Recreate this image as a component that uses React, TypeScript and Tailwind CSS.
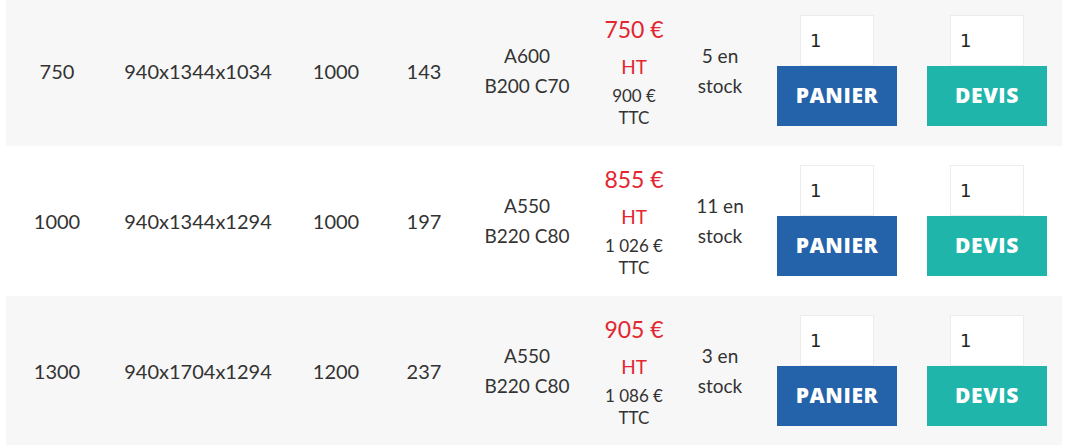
import React from "react";

type Row = {
  puissance: string;
  dims: string;
  a: string;
  b: string;
  dim1: string;
  dim2: string;
  ht: string;
  ttc: string;
  stock: string;
  gray: boolean;
};

const rows: Row[] = [
  { puissance: "750", dims: "940x1344x1034", a: "1000", b: "143", dim1: "A600", dim2: "B200 C70", ht: "750\u00a0€", ttc: "900\u202f€", stock: "5 en", gray: true },
  { puissance: "1000", dims: "940x1344x1294", a: "1000", b: "197", dim1: "A550", dim2: "B220 C80", ht: "855\u00a0€", ttc: "1\u202f026\u202f€", stock: "11 en", gray: false },
  { puissance: "1300", dims: "940x1704x1294", a: "1200", b: "237", dim1: "A550", dim2: "B220 C80", ht: "905\u00a0€", ttc: "1\u202f086\u202f€", stock: "3 en", gray: true },
];

function Action({ label, color }: { label: string; color: string }) {
  return (
    <div className="flex flex-col items-center mt-[-2px]">
      <div className="w-[74px] h-[51px] bg-white border border-[#ececec] flex items-center pl-[9px] text-[18px] text-[#222]" style={{ fontFamily: '"DejaVu Sans", sans-serif' }}>
        1
      </div>
      <div
        className={`w-[120px] h-[60px] flex items-center justify-center text-white text-[21px] font-extrabold tracking-[0.6px] ${color}`}
        style={{ fontFamily: '"Open Sans", sans-serif' }}
      >
        {label}
      </div>
    </div>
  );
}

export default function App() {
  return (
    <div className="w-[1072px] h-[445px] overflow-hidden bg-white text-[#333]" style={{ fontFamily: 'Lato, sans-serif' }}>
      <div className="mt-[-4px] ml-[6px] w-[1056px] flex flex-col">
        {rows.map((r, i) => (
          <div
            key={i}
            className={`h-[150px] grid grid-cols-[102px_180px_96px_80px_126px_88px_84px_150px_150px] items-center text-center text-[20px] ${r.gray ? "bg-[#f7f7f7]" : "bg-white"}`}
          >
            <div>{r.puissance}</div>
            <div>{r.dims}</div>
            <div>{r.a}</div>
            <div>{r.b}</div>
            <div className="leading-[30px] text-[19px]">
              <div>{r.dim1}</div>
              <div>{r.dim2}</div>
            </div>
            <div className="flex flex-col items-center">
              <div className="text-[23px] leading-[30px] text-[#e32630]">{r.ht}</div>
              <div className="text-[19px] leading-[30px] mt-[8px] text-[#e32630]">HT</div>
              <div className="text-[17px] leading-[22px] mt-[3px]">{r.ttc}</div>
              <div className="text-[17px] leading-[22px]">TTC</div>
            </div>
            <div className="leading-[30px] text-[19px]">
              <div>{r.stock}</div>
              <div>stock</div>
            </div>
            <Action label="PANIER" color="bg-[#2462aa]" />
            <Action label="DEVIS" color="bg-[#1fb5ab]" />
          </div>
        ))}
      </div>
    </div>
  );
}
